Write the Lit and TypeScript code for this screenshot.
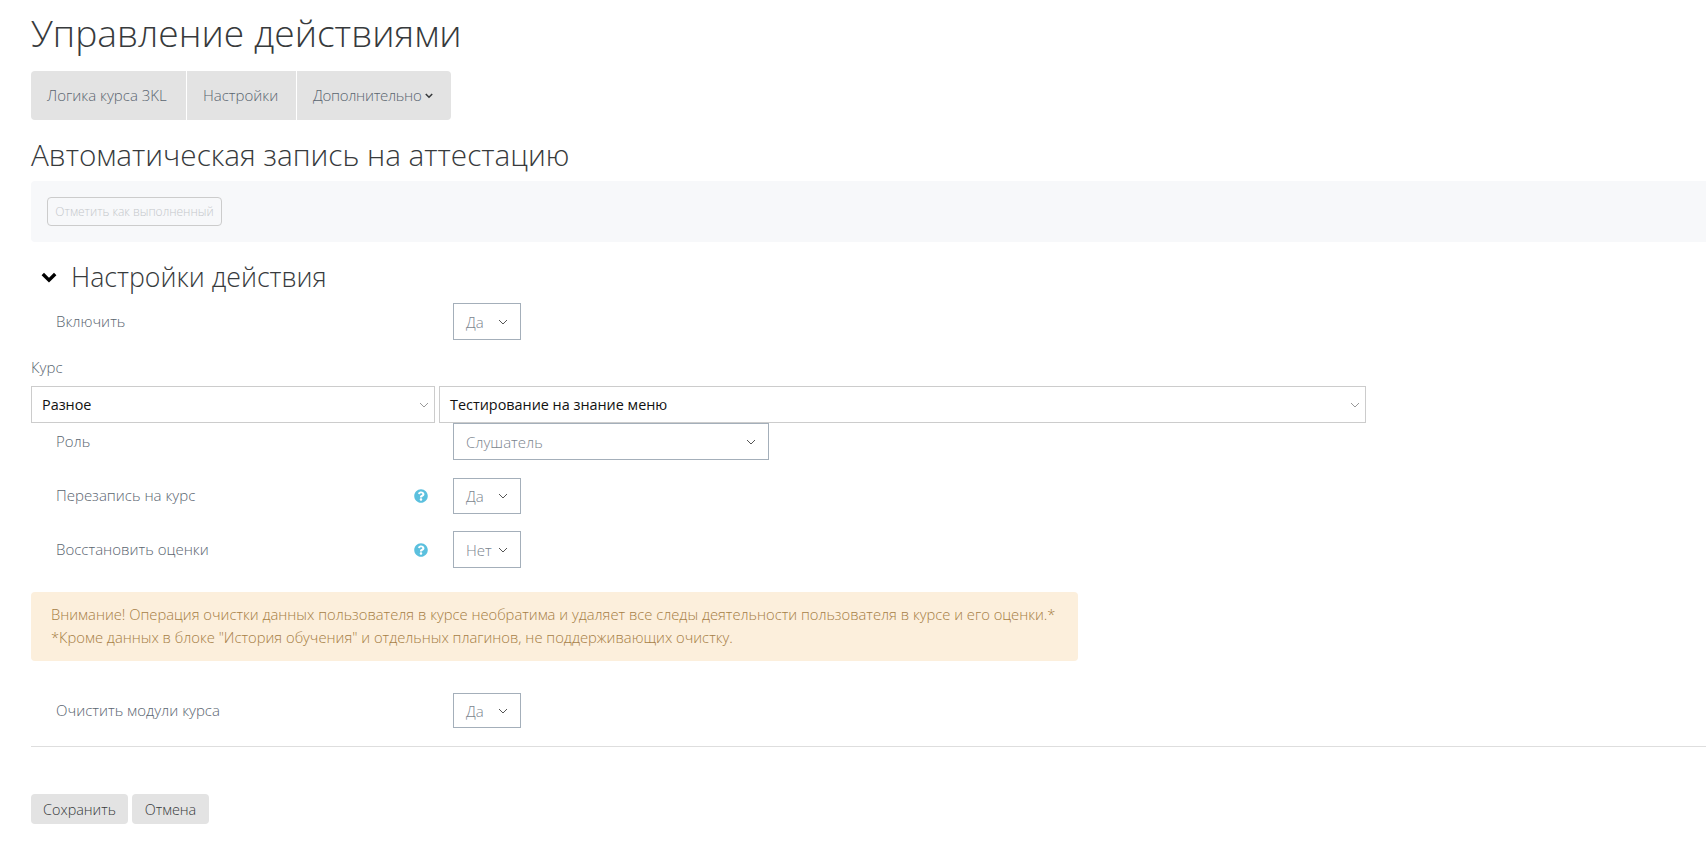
import { LitElement, html, css } from "lit";
import { customElement } from "lit/decorators.js";

const chev = html`<svg class="chev" viewBox="0 0 10 6" width="10" height="6"><path d="M1 1l4 4 4-4" fill="none" stroke="currentColor" stroke-width="1"/></svg>`;
const help = html`<svg class="help" viewBox="0 0 512 512" width="14" height="14"><path fill="#5bc0de" d="M504 256c0 137-111 248-248 248S8 393 8 256 119 8 256 8s248 111 248 248zM263 90c-54 0-89 23-116 63-4 5-3 12 3 16l35 26c5 4 13 3 17-2 18-22 30-35 57-35 20 0 45 13 45 32 0 15-12 22-32 33-23 13-54 30-54 71v4c0 7 5 12 12 12h56c7 0 12-5 12-12v-1c0-29 84-30 84-107 0-58-60-100-119-100zm-7 248c-26 0-46 21-46 46s20 46 46 46 46-21 46-46-20-46-46-46z"/></svg>`;

@customElement("app-root")
export class AppRoot extends LitElement {
  static styles = css`
    :host { display: block; width: 1706px; height: 845px; overflow: hidden; background: #fff; font-family: "Open Sans", sans-serif; color: #5a6570; font-size: 15px; font-weight: 300; }
    .page { padding: 0 0 0 31px; display: flex; flex-direction: column; }
    h1 { margin: 10px 0 0; font-size: 37.2px; line-height: 45px; font-weight: 300; color: #373a3c; }
    .tabs { display: flex; align-self: flex-start; gap: 1px; margin-top: 16px; height: 49px; }
    .tab { background: #e3e3e3; display: flex; align-items: center; padding: 0 15px 2px 16px; gap: 4px; font-size: 15px; box-sizing: border-box; }
    .tab:first-child { border-radius: 4px 0 0 4px; width: 155px; }
    .tab:nth-child(2) { width: 109px; }
    .tab:last-child { border-radius: 0 4px 4px 0; width: 154px; letter-spacing: -0.3px; }
    .tab svg { margin-top: 3px; }
    h2 { margin: 16px 0 0; font-size: 29.7px; line-height: 38px; font-weight: 300; color: #373a3c; }
    .panel { background: #f7f8fa; border-radius: 4px 0 0 4px; height: 61px; margin-top: 7px; display: flex; align-items: center; padding-left: 16px; }
    .done { width: 175px; height: 29px; box-sizing: border-box; border: 1px solid #ccc; border-radius: 4px; display: flex; align-items: center; justify-content: center; font-size: 12px; color: #c4c7ca; }
    .sec { display: flex; align-items: center; height: 36px; margin-top: 16px; font-size: 26.7px; color: #373a3c; }
    .sec svg { margin: 2px 14px 0 10px; }
    .row { display: flex; align-items: center; padding-left: 25px; }
    .lab { width: 358px; flex: none; padding-bottom: 2px; }
    .ico { width: 39px; flex: none; }
    .sel { border: 1px solid #a4afba; box-sizing: border-box; display: flex; align-items: center; justify-content: space-between; padding: 0 12px; height: 37px; width: 68px; color: #7b858e; font-size: 15px; flex: none; }
    .chev { color: #555; flex: none; }
    .help { display: block; }
    .lab2 { height: 20px; margin-top: 17px; display: flex; align-items: center; }
    .two { display: flex; gap: 4px; margin-top: 9px; height: 37px; }
    .s2 { border: 1px solid #ccc; box-sizing: border-box; display: flex; align-items: center; justify-content: space-between; padding: 0 5px 0 10px; font-weight: 400; color: #111; font-size: 14.4px; height: 37px; }
    .s2 .chev { color: #999; }
    .alert { background: #fcefdc; border-radius: 4px; width: 1047px; height: 69px; box-sizing: border-box; padding: 11px 20px; color: #a67e45; line-height: 23px; font-size: 14.75px; margin-top: 24px; white-space: nowrap; }
    hr { border: 0; border-top: 1px solid #dedede; margin: 18px 0 0; }
    .btns { display: flex; gap: 4px; margin-top: 47px; }
    .btn { background: #e3e3e3; border-radius: 4px; height: 30px; display: flex; align-items: center; justify-content: center; color: #373a3c; font-size: 14.4px; }
  `;
  row(label: string, value: string, hasHelp: boolean, mt: number, width = 68, height = 37) {
    return html`<div class="row" style="margin-top:${mt}px">
      <div class="lab">${label}</div>
      <div class="ico">${hasHelp ? help : ""}</div>
      <div class="sel" style="width:${width}px;height:${height}px">${value}${chev}</div>
    </div>`;
  }
  render() {
    return html`<div class="page">
      <h1>Управление действиями</h1>
      <div class="tabs">
        <div class="tab">Логика курса 3KL</div>
        <div class="tab">Настройки</div>
        <div class="tab">Дополнительно <svg viewBox="0 0 10 7" width="8" height="6"><path d="M1 1l4 4 4-4" fill="none" stroke="#373a3c" stroke-width="2"/></svg></div>
      </div>
      <h2>Автоматическая запись на аттестацию</h2>
      <div class="panel"><div class="done">Отметить как выполненный</div></div>
      <div class="sec"><svg viewBox="0 0 16 11" width="16" height="11"><path d="M1.8 2L8 8.2 14.2 2" fill="none" stroke="#000" stroke-width="3.4"/></svg>Настройки действия</div>
      ${this.row("Включить", "Да", false, 9)}
      <div class="lab2">Курс</div>
      <div class="two">
        <div class="s2" style="width:404px">Разное${chev}</div>
        <div class="s2" style="width:927px">Тестирование на знание меню${chev}</div>
      </div>
      ${this.row("Роль", "Слушатель", false, 0, 316)}
      ${this.row("Перезапись на курс", "Да", true, 18, 68, 36)}
      ${this.row("Восстановить оценки", "Нет", true, 17)}
      <div class="alert">Внимание! Операция очистки данных пользователя в курсе необратима и удаляет все следы деятельности пользователя в курсе и его оценки.*<br>*Кроме данных в блоке "История обучения" и отдельных плагинов, не поддерживающих очистку.</div>
      ${this.row("Очистить модули курса", "Да", false, 32, 68, 35)}
      <hr />
      <div class="btns"><div class="btn" style="width:97px">Сохранить</div><div class="btn" style="width:77px">Отмена</div></div>
    </div>`;
  }
}
